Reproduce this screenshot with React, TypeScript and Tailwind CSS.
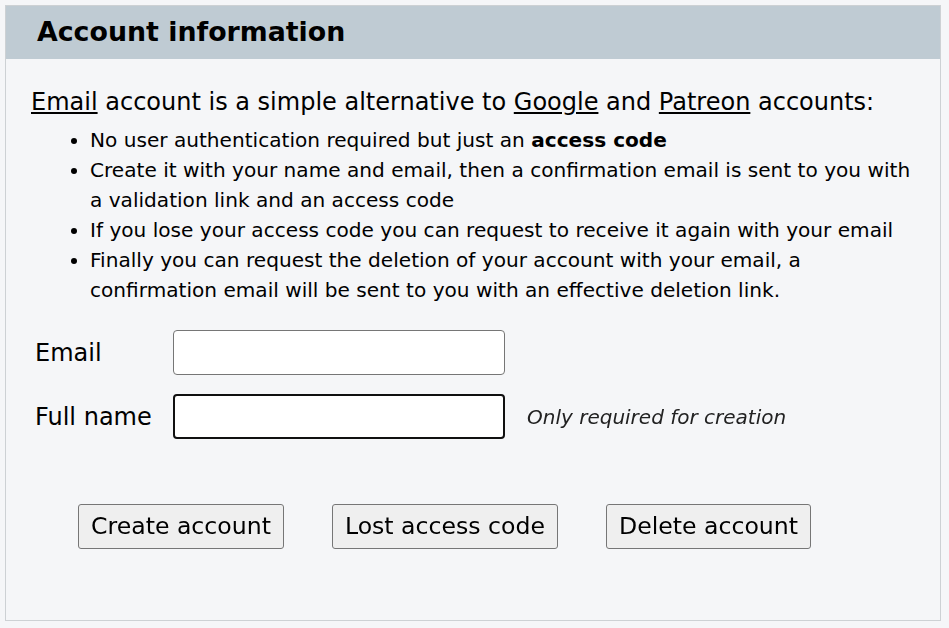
import { useState } from 'react';

const bullets = [
    <>No user authentication required but just an <strong>access code</strong></>,
    <>Create it with your name and email, then a confirmation email is sent to you with a validation link and an access code</>,
    <>If you lose your access code you can request to receive it again with your email</>,
    <>Finally you can request the deletion of your account with your email, a confirmation email will be sent to you with an effective deletion link.</>,
];

export default function App() {
    const [email, setEmail] = useState('');
    const [name, setName] = useState('');

    return (
        <div className="h-screen flex flex-col bg-[#f5f6f8] pt-[5px] pl-[5px] pr-[8px] pb-[7px] text-black" style={{ fontFamily: '"DejaVu Sans", Verdana, sans-serif' }}>
            <div className="flex-1 border border-[#cdd1d4] bg-[#f5f6f8]">
                <div className="h-[53px] bg-[#bfcbd3] flex items-center pl-[31px]">
                    <h1 className="text-[26.8px] font-bold">Account information</h1>
                </div>

                <div className="pl-[25px] pr-[20px] pt-[28px]">
                    <p className="text-[24px] leading-[30px]">
                        <a href="#" className="underline">Email</a> account is a simple alternative to{' '}
                        <a href="#" className="underline">Google</a> and{' '}
                        <a href="#" className="underline">Patreon</a> accounts:
                    </p>
                    <ul className="list-disc pl-[59px] text-[20.1px] leading-[30px] mt-[8px]">
                        {bullets.map((b, i) => (
                            <li key={i}>{b}</li>
                        ))}
                    </ul>

                    <div className="mt-[25px] flex flex-col gap-[19px]">
                        <div className="flex items-center">
                            <label className="w-[142px] pl-[4px] text-[24px]">Email</label>
                            <input
                                value={email}
                                onChange={(e) => setEmail(e.target.value)}
                                className="w-[332px] h-[45px] bg-white border border-[#767676] rounded-[4px] px-2 text-[22px] outline-none"
                            />
                        </div>
                        <div className="flex items-center">
                            <label className="w-[142px] pl-[4px] text-[24px]">Full name</label>
                            <input
                                autoFocus
                                value={name}
                                onChange={(e) => setName(e.target.value)}
                                className="w-[332px] h-[45px] bg-white border-2 border-[#101010] rounded-[4px] px-[3px] text-[22px] outline-none"
                            />
                            <span className="ml-[22px] text-[20px] italic text-[#222]">Only required for creation</span>
                        </div>
                    </div>

                    <div className="mt-[65px] pl-[47px] flex gap-[48px]">
                        <button className="h-[45px] px-[12px] bg-[#efefef] border border-[#767676] rounded-[3px] text-[23.6px]">Create account</button>
                        <button className="h-[45px] px-[12px] bg-[#efefef] border border-[#767676] rounded-[3px] text-[23.6px]">Lost access code</button>
                        <button className="h-[45px] px-[12px] bg-[#efefef] border border-[#767676] rounded-[3px] text-[23.6px]">Delete account</button>
                    </div>
                </div>
            </div>
        </div>
    );
}
